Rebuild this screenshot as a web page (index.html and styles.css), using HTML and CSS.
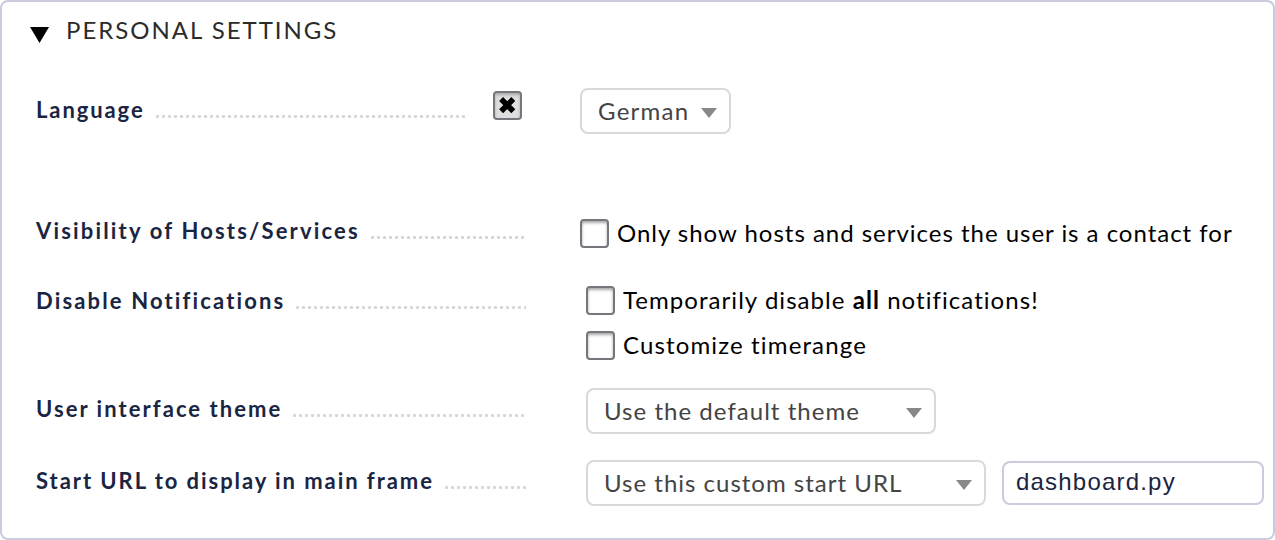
FILE: index.html
```html
<!DOCTYPE html>
<html lang="en">
<head>
<meta charset="utf-8">
<title>Personal settings</title>
<link rel="stylesheet" href="styles.css">
</head>
<body>
<section class="panel">
  <header class="head">
    <svg class="fold" width="19" height="16" viewBox="0 0 19 16"><path d="M0 0H19L9.5 16Z"/></svg>
    <h1 class="title">PERSONAL SETTINGS</h1>
  </header>
  <div class="row language">
    <div class="legend short"><span class="label">Language</span><span class="dots"></span></div>
    <span class="box checked"><svg width="17" height="17" viewBox="0 0 17 17"><path d="M2.1 2.1L14.3 14.3M14.3 2.1L2.1 14.3"/></svg></span>
    <div class="select s-language"><span>German</span><svg class="arrow" width="16" height="10" viewBox="0 0 16 10"><path d="M0 0H16L8 10Z"/></svg></div>
  </div>
  <div class="row visibility">
    <div class="legend"><span class="label">Visibility of Hosts/Services</span><span class="dots"></span></div>
    <label class="check"><span class="box"></span><span>Only show hosts and services the user is a contact for</span></label>
  </div>
  <div class="row notifications">
    <div class="legend"><span class="label">Disable Notifications</span><span class="dots"></span></div>
    <div class="stack">
      <label class="check temporary"><span class="box"></span><span>Temporarily disable <b>all</b> notifications!</span></label>
      <label class="check timerange"><span class="box"></span><span>Customize timerange</span></label>
    </div>
  </div>
  <div class="row theme">
    <div class="legend"><span class="label">User interface theme</span><span class="dots"></span></div>
    <div class="select s-theme"><span>Use the default theme</span><svg class="arrow" width="16" height="10" viewBox="0 0 16 10"><path d="M0 0H16L8 10Z"/></svg></div>
  </div>
  <div class="row start">
    <div class="legend"><span class="label">Start URL to display in main frame</span><span class="dots"></span></div>
    <div class="select s-start"><span>Use this custom start URL</span><svg class="arrow" width="16" height="10" viewBox="0 0 16 10"><path d="M0 0H16L8 10Z"/></svg></div>
    <input class="url" type="text" value="dashboard.py">
  </div>
</section>
</body>
</html>
```
FILE: styles.css
```css
* { box-sizing: border-box; }
body {
  margin: 0;
  background: #fff;
  font: 24px/30px Lato, sans-serif;
  letter-spacing: 1px;
  color: #000;
}
.panel {
  height: 540px;
  border: 2px solid #cacbdd;
  border-radius: 8px;
  padding: 13px 0 0 34px;
  overflow: hidden;
}
.head {
  display: flex;
  height: 73px;
  margin-left: -6px;
}
.fold { margin: 12px 17px 0 0; fill: #000; }
.title {
  margin: 0;
  font-size: 24px;
  font-weight: 400;
  line-height: 30px;
  letter-spacing: 1.98px;
  color: #2b2b2b;
}
.row { display: flex; align-items: flex-start; white-space: nowrap; }
.language { height: 131px; }
.visibility { height: 67px; }
.notifications { height: 102px; }
.theme { height: 72px; }
.legend {
  display: flex;
  width: 490px;
  margin-right: 60px;
  padding-top: 8px;
}
.legend.short { width: 430px; margin-right: 27px; }
.label {
  font-size: 22px;
  font-weight: 700;
  line-height: 28px;
  letter-spacing: 2px;
  color: #1a2542;
}
.dots {
  flex: 1;
  height: 3px;
  margin: 19px 0 0 11px;
  background: radial-gradient(circle at 1.5px 1.5px, #d6d6d6 1.3px, transparent 1.9px) 0 0 / 6px 3px repeat-x;
}
.language .label { letter-spacing: 1.9px; }
.visibility .label { letter-spacing: 2.17px; }
.notifications .label { letter-spacing: 2.14px; }
.theme .label { letter-spacing: 2.05px; }
.start .label { letter-spacing: 1.94px; }
.visibility .legend { margin: -3px 54px 0 0; padding-top: 1px; }
.notifications .legend { padding-top: 1px; }
.theme .legend, .start .legend { padding-top: 7px; }
.box {
  display: flex;
  flex: none;
  align-items: center;
  justify-content: center;
  width: 29px;
  height: 29px;
  border: 2px solid #74777b;
  border-radius: 4px;
  background: #fff;
  box-shadow: inset 0 2px 3px #aaa;
}
.checked { margin: 3px 58px 0 0; background: #dedede; }
.checked svg { stroke: #000; stroke-width: 5.6; }
.check { display: flex; gap: 8px; height: 29px; line-height: 28px; letter-spacing: 0.98px; }
.temporary { letter-spacing: 1.05px; }
.timerange { letter-spacing: 1.14px; }
.stack { display: grid; gap: 16px; }
.select {
  display: flex;
  align-items: center;
  justify-content: space-between;
  height: 46px;
  padding: 0 12px 0 16px;
  border: 2px solid #d9d9d9;
  border-radius: 8px;
  color: #444;
}
.arrow { margin-top: 4px; fill: #888; }
.s-language { width: 151px; letter-spacing: 1.25px; }
.s-theme { width: 350px; letter-spacing: 1.03px; }
.s-start { width: 400px; }
.url {
  width: 262px;
  height: 44px;
  margin: 1px 0 0 16px;
  padding: 0 12px 3px;
  border: 2px solid #cacbdd;
  border-radius: 8px;
  background: #fff;
  font: 24px "Liberation Sans", Arial, sans-serif;
  letter-spacing: 1.2px;
  color: #1a2542;
}
```
